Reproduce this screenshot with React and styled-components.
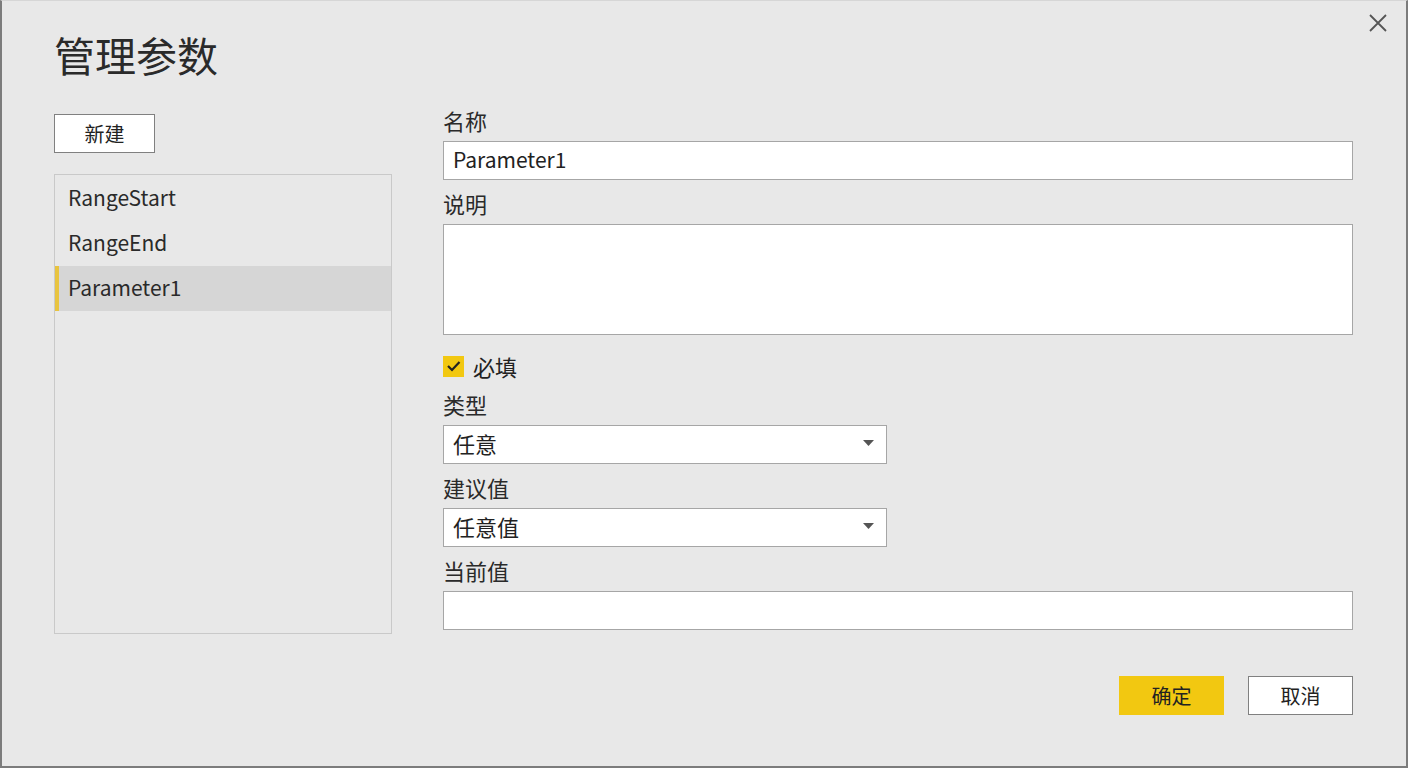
import React from "react";
import styled, { createGlobalStyle } from "styled-components";

const Global = createGlobalStyle`
  html, body { margin: 0; padding: 0; background: #e8e8e8; }
  * { box-sizing: border-box; }
  body { font-family: "Noto Sans CJK SC", "Noto Sans", sans-serif; color: #222; }
`;

const Dialog = styled.div`
  position: relative;
  width: 1408px;
  height: 768px;
  background: #e8e8e8;
  border-top: 1px solid #d6d6d6;
  border-left: 2px solid #7c7c7c;
  border-right: 2px solid #7c7c7c;
  border-bottom: 2px solid #7c7c7c;
  padding: 29px 0 0 52px;
`;

const Close = styled.button`
  position: absolute;
  top: 13px;
  right: 19px;
  width: 18px;
  height: 18px;
  padding: 0;
  border: none;
  background: transparent;
  display: flex;
`;

const Title = styled.h1`
  margin: 0;
  font-size: 41px;
  line-height: 48px;
  font-weight: 400;
  color: #2a2a2a;
`;

const Body = styled.div`
  display: grid;
  grid-template-columns: 338px 910px;
  column-gap: 51px;
  margin-top: 31px;
`;

const LeftCol = styled.div`
  display: flex;
  flex-direction: column;
  align-items: flex-start;
`;

const Button = styled.button`
  height: 39px;
  width: ${(p) => p.$w || 105}px;
  font-family: "Noto Sans CJK SC", sans-serif;
  font-size: 20px;
  color: #222;
  background: ${(p) => (p.$primary ? "#f2c811" : "#ffffff")};
  border: 1px solid ${(p) => (p.$primary ? "#f2c811" : "#808080")};
  padding: 0 0 1px;
  display: flex;
  align-items: center;
  justify-content: center;
`;

const NewButton = styled(Button)`
  margin-top: 5px;
`;

const List = styled.div`
  margin-top: 21px;
  width: 338px;
  height: 460px;
  border: 1px solid #c9c9c9;
  padding-top: 1px;
  display: flex;
  flex-direction: column;
`;

const Item = styled.div`
  height: 45px;
  display: flex;
  align-items: center;
  padding: 0 0 4px 13px;
  font-size: 21px;
  color: #2a2a2a;
  background: ${(p) => (p.$selected ? "#d6d6d6" : "transparent")};
  box-shadow: ${(p) => (p.$selected ? "inset 4px 0 0 #e8c440" : "none")};
`;

const RightCol = styled.div`
  display: flex;
  flex-direction: column;
`;

const Label = styled.div`
  height: 28px;
  line-height: 22px;
  font-size: 22px;
  margin-top: ${(p) => p.$mt ?? 12}px;
  margin-bottom: 4px;
  color: #2a2a2a;
`;

const Input = styled.div`
  height: ${(p) => p.$h || 39}px;
  width: ${(p) => p.$w || 910}px;
  background: #fff;
  border: 1px solid #a6a6a6;
  padding: 0 12px 3px 9px;
  font-size: ${(p) => (p.$latin ? 21 : 22)}px;
  display: flex;
  align-items: ${(p) => (p.$multi ? "flex-start" : "center")};
  justify-content: space-between;
  color: #222;
`;

const CheckRow = styled.div`
  margin-top: 18px;
  height: 28px;
  display: flex;
  align-items: center;
  gap: 9px;
  font-size: 22px;
  line-height: 22px;
`;

const CheckText = styled.span`
  padding-bottom: 3px;
`;

const CheckBox = styled.span`
  width: 21px;
  height: 21px;
  margin-top: -2px;
  background: #f2c811;
  display: flex;
  align-items: center;
  justify-content: center;
`;

const Footer = styled.div`
  margin-top: 46px;
  display: flex;
  justify-content: flex-end;
  gap: 24px;
`;

const Arrow = () => (
  <svg width="11" height="6" viewBox="0 0 11 6">
    <path d="M0 0 H11 L5.5 6 Z" fill="#555" />
  </svg>
);

export default function App() {
  return (
    <>
      <Global />
      <Dialog>
        <Close aria-label="close">
          <svg width="18" height="18" viewBox="0 0 18 18">
            <path d="M1 1 L17 17 M17 1 L1 17" stroke="#555" strokeWidth="1.8" fill="none" />
          </svg>
        </Close>
        <Title>管理参数</Title>
        <Body>
          <LeftCol>
            <NewButton $w={101}>新建</NewButton>
            <List>
              <Item>RangeStart</Item>
              <Item>RangeEnd</Item>
              <Item $selected>Parameter1</Item>
            </List>
          </LeftCol>
          <RightCol>
            <Label $mt={0}>名称</Label>
            <Input $latin>Parameter1</Input>
            <Label>说明</Label>
            <Input $h={111} $multi />
            <CheckRow>
              <CheckBox>
                <svg width="15" height="12" viewBox="0 0 15 12">
                  <path d="M2 6 L6 10 L13.5 2" stroke="#222" strokeWidth="2.2" fill="none" />
                </svg>
              </CheckBox>
              <CheckText>必填</CheckText>
            </CheckRow>
            <Label>类型</Label>
            <Input $w={444}>
              <span>任意</span>
              <Arrow />
            </Input>
            <Label>建议值</Label>
            <Input $w={444}>
              <span>任意值</span>
              <Arrow />
            </Input>
            <Label>当前值</Label>
            <Input />
            <Footer>
              <Button $primary>确定</Button>
              <Button>取消</Button>
            </Footer>
          </RightCol>
        </Body>
      </Dialog>
    </>
  );
}
